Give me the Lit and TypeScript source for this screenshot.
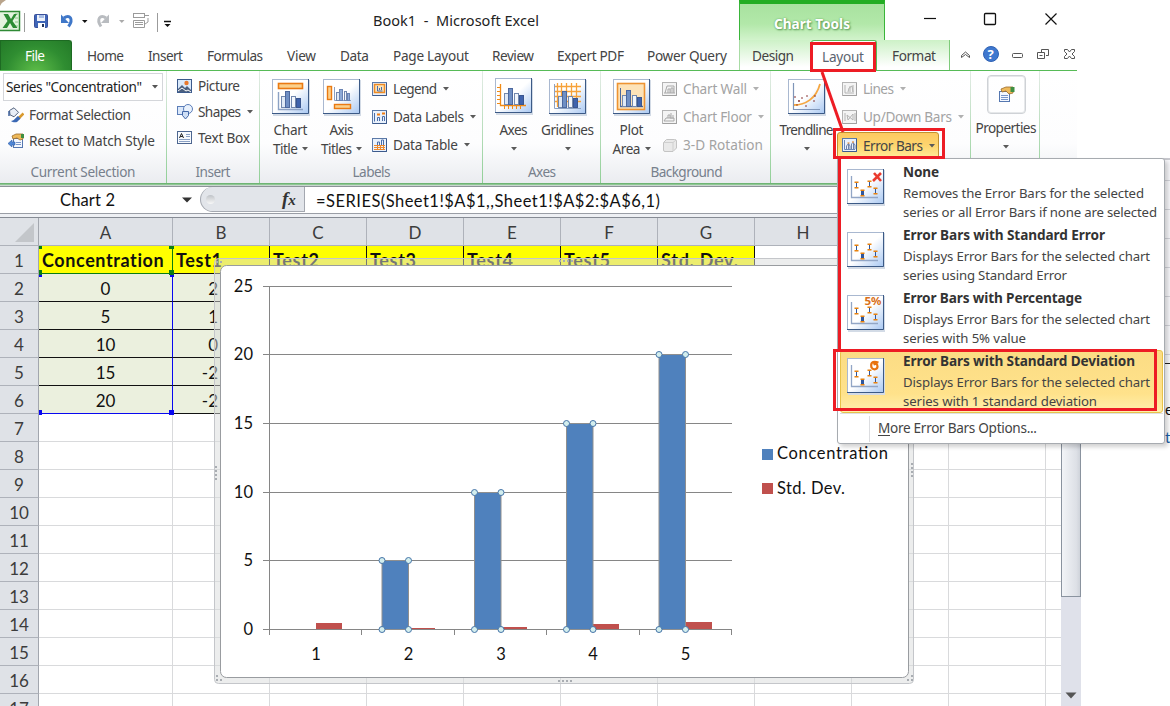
import { LitElement, html, svg, css, nothing } from "lit";
import { customElement, property } from "lit/decorators.js";

/** A single line of text that is tracked to fill an exact width. */
@customElement("fit-label")
class FitLabel extends LitElement {
  @property({ type: Number }) w = 0;
  @property() text = "";
  static styles = css`
    :host { display: inline-block; white-space: pre; flex: none; }
    .t { display: inline-block; text-decoration: inherit; }
  `;
  firstUpdated() {
    const el = this.renderRoot.querySelector(".t") as HTMLElement;
    if (!this.w) return;
    const n = Math.max(1, this.text.length - 1);
    const natural = el.getBoundingClientRect().width;
    el.style.letterSpacing = `${(this.w - natural) / n}px`;
    this.style.width = `${this.w}px`;
  }
  render() {
    return html`<span class="t">${this.text}</span>`;
  }
}

const T = (text: string, w: number, cls = "") => html`<fit-label class=${cls} .w=${w} .text=${text}></fit-label>`;
const arrow = (cls = "") => html`<svg class="arr ${cls}" width="6" height="4"><path d="M0 0h6L3 3.6z" fill="currentColor"/></svg>`;

/* ---------- large icons, 37 x 36 ---------- */
const bars = (x = 0, y = 0) => svg`<g transform="translate(${x} ${y})" stroke-width="1">
  <rect x="9.500" y="17.500" width="4" height="11" fill="#dfe9f6" stroke="#7288ae"/>
  <rect x="13.500" y="12.500" width="4" height="16" fill="#6f8fc4" stroke="#4c689e"/>
  <rect x="19.500" y="17.500" width="4" height="11" fill="#f2f6fc" stroke="#7288ae"/>
  <rect x="24.500" y="19.500" width="4" height="9" fill="#3f63ad" stroke="#3a568f"/></g>`;
const tile = (body: unknown) => html`<svg class="big" width="38" height="37" viewBox="0 0 38 37">
  <defs><linearGradient id="g" x1="0" y1="0" x2="1" y2="1"><stop offset=".5" stop-color="#fff"/><stop offset="1" stop-color="#a9c8f2"/></linearGradient></defs>
  <rect x="1" y="1" width="37" height="36" fill="#d3dbe6"/>
  <rect x=".5" y=".5" width="36" height="34" fill="url(#g)" stroke="#a9b8d0"/>
  <path d="M36.500 0V34.500H0" fill="none" stroke="#3c5a86"/>${body}</svg>`;
const axis = svg`<path d="M6.500 13V30.500H31" fill="none" stroke="#8ba1c4" stroke-width="1.400"/>`;
const bigIcons: Record<string, unknown> = {
  title: tile(svg`<rect x="6.500" y="4.500" width="24" height="5" fill="#fbd08b" stroke="#ea7a12" stroke-width="1.600"/>${axis}${bars()}`),
  axisTitles: tile(svg`<rect x="4.500" y="7.500" width="4" height="13" fill="#fbd08b" stroke="#ea7a12" stroke-width="1.400"/>
    <rect x="11.500" y="25.500" width="16" height="4" fill="#fbd08b" stroke="#ea7a12" stroke-width="1.400"/>
    <path d="M11.500 8V21.500H28" fill="none" stroke="#8ba1c4"/><rect x="13.500" y="13.500" width="3" height="8" fill="#dfe9f6" stroke="#7288ae"/><rect x="16.500" y="10.500" width="3" height="11" fill="#8eaad6" stroke="#6a84b4"/><rect x="21.500" y="12.500" width="2" height="9" fill="#f2f6fc" stroke="#7288ae"/><rect x="24.500" y="14.500" width="2" height="7" fill="#8eaad6" stroke="#6a84b4"/>`),
  axes: tile(svg`<path d="M5.500 6V27.500H31" fill="none" stroke="#f08a16" stroke-width="1.300"/>
    <path d="M2 9.500h4M2 13.500h4M2 17.500h4M2 21.500h4M2 25.500h4M9.500 27v4M13.500 27v4M17.500 27v4M21.500 27v4M25.500 27v4" stroke="#f08a16"/>${bars(0, -2)}`),
  grid: tile(svg`<path d="M8.500 4V28M12.500 4V28M17.500 4V28M22.500 4V28M27.500 4V28M6 7.500H32M6 12.500H32M6 17.500H32M6 22.500H32" stroke="#f6a23a" stroke-width="1.300"/><path d="M5.500 5V29.500H32" fill="none" stroke="#8ba1c4"/>${bars()}`),
  plot: tile(svg`<rect x="4.500" y="4.500" width="27" height="26" fill="#fde3b8" stroke="#ee9432" stroke-width="1.600"/><path d="M7 27.500H30" stroke="#4c689e" stroke-width="1.400"/><path d="M7.500 9V27" stroke="#4c689e"/>${bars(0, -1)}`),
  trend: tile(svg`<path d="M5.500 4V30.500H32" fill="none" stroke="#7f95b8" stroke-width="1.200"/><path d="M6 26C17 26 28 20 32 5" fill="none" stroke="#f5a742" stroke-width="1.800"/>
    <g fill="#7c1d1d"><circle cx="7" cy="18" r=".8"/><circle cx="11" cy="22" r=".9"/><circle cx="14" cy="19" r=".8"/><circle cx="19" cy="17" r=".8"/><circle cx="18" cy="27" r=".8"/><circle cx="27" cy="17" r=".8"/><circle cx="26" cy="22" r=".8"/><circle cx="9" cy="26" r=".7"/></g>`),
};
const ebar = (x: number, y: number, blue = false) => svg`<rect x=${blue ? x - 1.5 : x - 0.5} y=${y} width=${blue ? 3 : 1} height="5" fill="#2f569c"/><rect x=${x - 2} y=${y - 1} width="4" height="1.500" fill="#e8820e"/><rect x=${x - 2} y=${y + 4.5} width="4" height="1.500" fill="#e8820e"/>`;
const errTile = (extra: unknown) => tile(svg`<path d="M4.500 7V28.500H31" fill="none" stroke="#92a6c6" stroke-width="1.300"/>${ebar(9.5, 13.5)}${ebar(15.5, 21.5, true)}${ebar(22.5, 12.5)}${ebar(28.5, 19.5)}${extra}`);

/* ---------- small icons, 15 x 14 ---------- */
const mini = (kind: string) => {
  const off = ["wall", "floor", "lines", "updown", "rot"].includes(kind);
  const st = off ? "#b4b4b4" : "#5c7aa8", bg = off ? "#f4f4f4" : "#e9f1fc";
  if (kind === "rot") return html`<svg class="mini" width="16" height="15"><path d="M1.500 4.500L4.500 1.500H12.500Q14.500 1.500 14.500 3V10L11 13.500H3Q1.500 13.500 1.500 12z" fill="#e9e9e9" stroke="#c4c4c4"/><path d="M2 4.500H11V13M11 4.500L14 2" fill="none" stroke="#cfcfcf"/></svg>`;
  const inner: Record<string, unknown> = {
    legend: svg`<rect x="2.500" y="2.500" width="10" height="8" fill="#fde3b8" stroke="#ee8a22" stroke-width="1.500"/><path d="M5.500 4v5h5M7.500 8V6M9.500 8V5" stroke="#4a6da8" fill="none"/>`,
    labels: svg`<path d="M2.500 3V11.500M5.500 11V7.500h2v3.500M10.500 11V6.500h2v4.500" fill="none" stroke="#4a6da8"/><path d="M5 4.500h3M10 3.500h3" stroke="#ef7d12" stroke-width="2"/>`,
    table: svg`<path d="M5.500 7V4h2v3M9.500 7V2h2v5" fill="none" stroke="#4a6da8"/><path d="M2 7.500h11M2 9.500h11M2 11.500h11M5.500 7v5M8.500 7v5M11.500 7v5" stroke="#f0892a"/>`,
    wall: svg`<path d="M3 11L5 4h7v7M6 11V7h2v4M9 11V6h2v5M2 11h11" fill="none" stroke="#a9a9a9"/>`,
    floor: svg`<path d="M2 11l2-3h8v3zM6 8V5h2v3M9 9V3M11 9V5" fill="none" stroke="#a9a9a9"/>`,
    lines: svg`<path d="M3 3v8h9M6 10l1-4 3-2 1 6M8 4v6M11 3v7" fill="none" stroke="#b4b4b4"/>`,
    updown: svg`<path d="M3 3v8M5 5l6 5V4L6 10zM13 3v8" fill="none" stroke="#b4b4b4"/>`,
    error: svg`<path d="M2.500 2v9.500H13" stroke="#6d88b4" fill="none"/><path d="M4.500 11V8l2-2.500L8 8v3M6.500 6v5M9.500 11V6l1.500-1.500L13 7v4M11.500 5v6" fill="none" stroke="#7183a8"/><path d="M5.500 5h2M10 4h2" stroke="#e87d10"/>`,
  };
  return html`<svg class="mini" width="16" height="15"><rect x=".5" y=".5" width="14" height="13" fill=${bg} stroke=${st}/>${inner[kind]}<path d="M14.500 1V13.500H1" fill="none" stroke=${off ? "#a0a0a0" : "#3c5a8c"}/></svg>`;
};
const propIcon = html`<svg class="mini" width="17" height="16"><rect x="1.500" y="5.500" width="10" height="10" fill="#f4f8ff" stroke="#5577b0"/><path d="M3 9.500h7M3 11.500h7M3 13.500h7" stroke="#7895c8"/><path d="M3 3L8 1l7 0v6l-4 1-3-3-4 1z" fill="#eeb95a" stroke="#9a6b2a" stroke-width=".8"/><path d="M12.500 1h4v5h-4z" fill="#3e8f42"/></svg>`;
const misc: Record<string, unknown> = {
  format: html`<svg class="mini" width="17" height="16"><path d="M1.500 3.500L6 .8l4.500 4.500-4.500 4.500-4-2z" fill="#e9eef7" stroke="#56657f"/><path d="M1 4v5" stroke="#3d5f9a" stroke-width="1.500"/><path d="M15.500 6.500L10 12" stroke="#d99a2e" stroke-width="2.600"/><path d="M10 9l2.500 2.500L9 15c-2 .8-5 0-6-1 3 0 4-3 7-5z" fill="#3b68b4"/></svg>`,
  reset: html`<svg class="mini" width="17" height="16"><rect x="5.500" y="5.500" width="9" height="9" fill="#f4f8ff" stroke="#5577b0"/><path d="M8 9.500h5M8 11.500h5" stroke="#7895c8"/><path d="M4 3l4-2 7 0v5l-3 1-3-2-4 1z" fill="#eeb95a" stroke="#9a6b2a" stroke-width=".8"/><path d="M13 1h3v4h-3z" fill="#3e8f42"/><path d="M0 10.500L4 7v2h3v3H4v2z" fill="#4f86d6" stroke="#2f5ea8" stroke-width=".6"/></svg>`,
  picture: html`<svg class="mini" width="16" height="15"><rect x=".5" y=".5" width="14" height="13" fill="#d9e9fb" stroke="#3c5a8c"/><path d="M1 13V10l4-4 3 3 2-2 4 4v2z" fill="#4a5f7f"/><path d="M1 12l4-3 4 3 2-1 3 2" fill="none" stroke="#fff"/><circle cx="9.500" cy="4" r="2.200" fill="#e8792e"/></svg>`,
  shapes: html`<svg class="mini" width="17" height="16"><rect x=".5" y="2.500" width="9" height="8" fill="#dbe8fa" stroke="#5b7db8"/><circle cx="11" cy="5" r="4.500" fill="#e9f1fc" stroke="#5b7db8"/><path d="M5.500 7.500h6v4l-3 3.500-3-3.500z" fill="#cfdff5" stroke="#4468a8"/></svg>`,
  textbox: html`<svg class="mini" width="16" height="14"><rect x=".5" y=".5" width="14" height="12" fill="#f7fafe" stroke="#4d6690"/><path d="M9 3.500h4M9 5.500h4M2 8.500h11M2 10.500h11" stroke="#8aa0c4"/><path d="M2.500 7L4.500 2.500L6.500 7M3.200 5.500h2.600" stroke="#222" fill="none"/></svg>`,
};

const big = (icon: string, l1: [string, number], l2: [string, number] | null, cls: string) => html`
  <div class="bigbtn ${cls}">${bigIcons[icon]}
    <div class="bl first">${T(l1[0], l1[1])}</div>
    <div class="bl">${l2 ? T(l2[0], l2[1]) : nothing}${arrow(l2 ? "gap4" : "")}</div>
  </div>`;
const small = (icon: string, text: string, w: number, off = false, arr = true) => html`
  <div class="small ${off ? "off" : ""}">${mini(icon)}${T(text, w)}${arr ? arrow() : nothing}</div>`;
const row26 = (icon: string, text: string, w: number, arr = false) => html`
  <div class="small r26">${misc[icon]}${T(text, w)}${arr ? arrow() : nothing}</div>`;

const COLS = ["A", "B", "C", "D", "E", "F", "G", "H", "", "", ""];
const HEAD: [string, number][] = [["Concentration", 122], ["Test1", 46], ["Test2", 46], ["Test3", 46], ["Test4", 46], ["Test5", 46], ["Std. Dev.", 77]];
const A = ["0", "5", "10", "15", "20"];
const B = ["2", "1", "0", "-2", "-2"];
const CHART_X = [316, 408.5, 501, 593, 685.5];
const BLUE_TOP = [0, 560, 492, 423, 354];
const RED_TOP = [623, 628, 627, 624, 622];
const Y_LABELS: [string, number][] = [["25", 286.5], ["20", 354.5], ["15", 423.5], ["10", 492.5], ["5", 560.5], ["0", 629.5]];

const MENU: { t: string; tw: number; a: string; aw: number; b: string; bw: number; x: unknown }[] = [
  { t: "None", tw: 36, a: "Removes the Error Bars for the selected", aw: 241, b: "series or all Error Bars if none are selected", bw: 254,
    x: svg`<path d="M27 4l7 8M34 4l-8 8" stroke="#ea3a2e" stroke-width="2.600"/>` },
  { t: "Error Bars with Standard Error", tw: 202, a: "Displays Error Bars for the selected chart", aw: 247, b: "series using Standard Error", bw: 164, x: nothing },
  { t: "Error Bars with Percentage", tw: 179, a: "Displays Error Bars for the selected chart", aw: 247, b: "series with 5% value", bw: 123,
    x: svg`<text x="17.500" y="10" font-size="10" font-weight="700" font-family="Noto Sans, sans-serif" textLength="17" lengthAdjust="spacingAndGlyphs" fill="#d9701a">5%</text>` },
  { t: "Error Bars with Standard Deviation", tw: 232, a: "Displays Error Bars for the selected chart", aw: 247, b: "series with 1 standard deviation", bw: 194,
    x: svg`<path d="M31.500 4.500c-7-2-8 1-7 5 2 3 6 2 6-1s-2-3-4-2" fill="none" stroke="#e8720e" stroke-width="2.200"/>` },
];

@customElement("app-root")
class AppRoot extends LitElement {
  static styles = css`
    :host { display: block; position: relative; width: 1170px; height: 706px; overflow: hidden; background: #fff;
      font: 13.6px/20px "Noto Sans", sans-serif; color: #444; }
    svg { display: block; flex: none; }
    .page { display: flex; height: 706px; }
    .win { width: 1081px; display: flex; flex-direction: column; flex: none; }
    .side { width: 89px; padding-top: 158px; }
    .side-in { height: 206px; border-top: 2px solid #c9c9cf; border-bottom: 1px solid #222;
      background: repeating-linear-gradient(#f8f8fb 0 20px, #d3d4da 20px 21px, #f8f8fb 21px 29px); box-sizing: border-box; }
    .side-t { font: 15px/24px "Lato", sans-serif; color: #111; padding: 33px 0 0 84px; }
    .blue { color: #1b5fa8; padding-top: 4px; }

    .head { height: 70px; display: flex; flex: none; }
    .headL { width: 739px; }
    .qat { height: 40px; display: flex; align-items: center; color: #222; }
    .apptitle { font-size: 14.5px; color: #222; margin-left: 198px; }
    .tabs { display: flex; height: 30px; }
    .file { width: 72px; height: 30px; box-sizing: border-box; padding-left: 24px; line-height: 30px; color: #fff; border: 1px solid #1d6a22; border-bottom: 0;
      border-radius: 0 3px 0 0; background: radial-gradient(ellipse at 50% 110%, #5fbe49 0, #2f8d31 60%, #237a28 100%); }
    .tab { line-height: 32px; }
    .ctxwrap { width: 211px; height: 70px; }
    .ctx { height: 40px; width: 146px; box-sizing: border-box; border-top: 4px solid #22ad22; border-left: 1px solid #3ab53a; border-right: 1px solid #3ab53a;
      background: linear-gradient(#a8e29f, #b2e8a9 55%, #d2f3cc); padding: 10px 0 0 34px; color: #fff; font-weight: 700; text-shadow: 1px 1px 2px #5a9a55, 0 0 2px #6bab65; }
    .ctxtabs { height: 30px; display: flex; background: linear-gradient(#cdf1c7, #fff 90%); border-left: 1px solid #a8dca4; border-right: 1px solid #7ecb7a; box-sizing: border-box; }
    .ctxtabs .tab:nth-child(1) { padding-left: 12px; }
    .ctxtabs .tab.fmt { margin-left: 15px; }
    .laytab { background: #fff; border: 1px solid #57bb57; border-bottom: 0; border-radius: 3px 3px 0 0; width: 66px; box-sizing: border-box; margin-left: 17px; padding-left: 10px; color: #5c6470; line-height: 31px; }
    .wctl { width: 130px; }

    .ribbon { width: 1077px; height: 113px; display: flex; background: linear-gradient(#fff 0, #fdfdfe 65%, #eaecf0 100%); border-top: 1px solid #57bb57; box-sizing: border-box; flex: none; }
    .grp { box-sizing: border-box; border-right: 1px solid; border-image: linear-gradient(#e4ece6, #8fcf95) 1; display: flex; flex-direction: column; height: 112px; }
    .grp > .body { height: 92px; display: flex; flex: none; }
    .cap { height: 18px; display: flex; justify-content: center; align-items: center; color: #77808c; }
    .g1 { width: 167px; } .g2 { width: 93px; } .g3 { width: 223px; } .g4 { width: 118px; } .g5 { width: 170px; } .g6 { width: 200px; } .g7 { width: 69px; }
    .g5 .cap { padding-left: 2px; } .g3 .cap, .g4 .cap { padding-left: 1px; }
    .g1 .body, .g2 .body { flex-direction: column; padding-top: 2px; box-sizing: border-box; }
    .combo { width: 160px; height: 28px; box-sizing: border-box; margin: 0 0 1px 3px; border: 1px solid #d4d6da; background: #fff; display: flex; align-items: center; padding-left: 2px; color: #222; }
    .combo .arr { margin-left: 10px; color: #555; }
    .small { height: 28px; display: flex; align-items: center; }
    .small .mini { width: 16px; margin-right: 5px; }
    .small .arr { margin-left: 6px; }
    .r26 { height: 26px; }
    .g1 .r26 { padding-left: 8px; } .g2 .r26 { padding-left: 10px; }
    .off { color: #a3a3a3; }
    .off svg.arr { color: #b0b0b0; }
    .arr { color: #5a5a5a; }
    .col { padding-top: 4px; }
    .bigbtn { display: flex; flex-direction: column; align-items: center; padding-top: 8px; flex: none; }
    .axesb { padding-top: 7px; }
    .axesb .first { margin-top: 5px; }
    .bl { height: 19px; display: flex; align-items: center; justify-content: center; }
    .first { margin-top: 4px; }
    .gap4 { margin-left: 4px; }
    .b51 { width: 51px; } .b53 { width: 53px; } .b55 { width: 55px; } .b67 { width: 67px; }
    .g3 .body { padding-left: 5px; } .g4 .body, .g5 .body { padding-left: 4px; } .g6 .body { padding-left: 2px; }
    .g3 .col { margin-left: 5px; } .g5 .col { margin-left: 4px; } .g6 .col { margin-left: 2px; }
    .hot { box-sizing: border-box; height: 27px; margin: 1px 0 0 -5px; width: 102px; padding-left: 4px; border: 1px solid #c2902e; border-radius: 3px; background: linear-gradient(#fdc95f, #fdd56f 50%, #ffee9a); color: #444; }
    .propbox { width: 39px; height: 39px; border: 1px solid #cfd2d6; border-radius: 4px; box-sizing: border-box; box-shadow: inset 0 0 0 1px #e6e8ea; padding: 10px 0 0 10px; }
    .g7 .bigbtn { padding: 4px 0 0 1px; width: 68px; }
    .g7 .first { margin-top: 4px; }

    .rule { height: 4px; background: linear-gradient(#6fb474 0 1px, #8fc794 1px 2px, #c9d6cf 2px 3px, #8e9399 3px); flex: none; }
    .fbar { height: 26px; display: flex; border-bottom: 1px solid #9a9ea6; flex: none; font: 16.5px/28px "Lato", sans-serif; color: #111; }
    .name { width: 200px; box-sizing: border-box; padding-left: 60px; display: flex; align-items: center; }
    .name svg { margin-left: 67px; }
    .fxw { width: 105px; height: 25px; box-sizing: border-box; border: 1px solid #a4a8b0; border-top: 0; border-radius: 14px 0 0 14px; background: #e2e5ea; display: flex; align-items: center; }
    .knob { width: 9px; height: 9px; border-radius: 50%; background: linear-gradient(#bfc3c8, #f8f8f8); margin-left: 5px; }
    .fx { font: italic 700 19px/24px "Liberation Serif", serif; margin-left: 67px; color: #333; }
    .fx small { font-size: 15px; }
    .fin { padding-left: 11px; }
    .under { height: 4px; box-sizing: border-box; background: #eef0f4; border-bottom: 1px solid #868b94; flex: none; }
    .work { display: flex; height: 488px; overflow: hidden; }
    .sheet { width: 1061px; overflow: hidden; font: 17px/29px "Lato", sans-serif; color: #111; }
    .r { display: flex; height: 28px; width: 1200px; }
    .c { width: 97px; height: 28px; box-sizing: border-box; border-right: 1px solid #d9dadc; border-bottom: 1px solid #d9dadc; flex: none; text-align: center; }
    .c.a { width: 134px; }
    .rh { width: 39px; height: 28px; box-sizing: border-box; background: #dfe2e7; border-right: 1px solid #a2a6ae; border-bottom: 1px solid #aeb2ba; text-align: center; color: #3c3c3c; flex: none; }
    .ch .c { background: #dfe2e7; border-color: #aeb2ba; color: #3c3c3c; }
    .tri { padding: 5px 0 0 15px; }
    .y { background: #ff0; border-color: #111; font-weight: 700; font-size: 18px; text-align: left; padding-left: 3px; line-height: 29px; }
    .y.a { border-right-color: #0a7d12; border-bottom-color: #0a7d12; }
    .e { background: #ebf0de; border-color: #111; }
    .e.a { border-right-color: #0808f0; }
    .e.last { border-bottom-color: #0808f0; }
    .eb { text-align: right; padding-right: 51px; border-right-color: #ebf0de; }
    .sb { width: 20px; background: #dfe1ea; display: flex; flex-direction: column; justify-content: space-between; align-items: center; }
    .thumb { width: 20px; height: 379px; box-sizing: border-box; border: 1px solid #8a939f; border-top: 0; background: linear-gradient(90deg, #f2f4f7, #dde0e6 80%, #cfd3da); }
    .sb svg { margin-bottom: 7px; }

    .chart { position: absolute; left: 214px; top: 258px; width: 700px; height: 426px; }
    .chart text { font: 16.5px "Lato", sans-serif; fill: #111; }
    .menu { position: absolute; left: 837px; top: 158px; width: 328px; height: 286px; box-sizing: border-box; background: #fff; border: 1px solid #a7abb0; border-radius: 0 3px 3px 3px; box-shadow: 3px 3px 4px rgba(0,0,0,.18); padding: 2px 1px 0 2px; }
    .mi { height: 63px; box-sizing: border-box; display: flex; padding: 8px 0 0 7px; }
    .mi.sel { background: linear-gradient(#fbdc84, #ffe28b 70%, #fff0ad); border: 1px solid #e8c24a; border-radius: 3px; padding: 7px 0 0 6px; }
    .mtx { margin: -7px 0 0 18px; display: flex; flex-direction: column; font-size: 13.2px; }
    .mtx fit-label { height: 19px; line-height: 19px; }
    .mtx .mt { font-weight: 700; color: #333; font-size: 13.6px; height: 22px; }
    .more { height: 30px; display: flex; border-top: 1px solid #dfe0e3; }
    .more .gut { width: 29px; border-right: 1px solid #dcdde0; margin: 2px 0; }
    .more .mlb { padding: 4px 0 0 8px; display: flex; }
    .mlb .u { text-decoration: underline; text-underline-offset: 2px; }
    .marks { position: absolute; left: 0; top: 0; }
  `;

  private head() {
    return html`<div class="head">
      <div class="headL">
        <div class="qat">
          <svg width="175" height="40">
            <path d="M0 0H6Q2 2 0 6z" fill="#b9a48c"/>
            <rect x="-2" y="11.500" width="21.500" height="19" fill="#e4f3df" stroke="#2f8a35" stroke-width="1.500"/>
            <path d="M15 14h3M15 18h3M15 22h3M15 26h3" stroke="#8cc98c"/>
            <path d="M3.500 14H8l3 5 3-5h3l-4.500 7 5 7H13l-3-5-3 5H2.500l5-7z" fill="#2c8c34"/>
            <path d="M24.500 13V32" stroke="#9b9b9b"/>
            <rect x="34.500" y="14.500" width="13" height="13" rx="1" fill="#3f66b8" stroke="#3a509a"/><rect x="37" y="15" width="8" height="6" fill="#eef2fa"/><path d="M39 15h5v3h-5z" fill="#a6bce4"/><rect x="38" y="23" width="7" height="5" fill="#fff"/><rect x="42" y="24" width="2" height="3" fill="#22345e"/>
            <path d="M64 18C69.500 13.500 74 19 68.500 26.500" fill="none" stroke="#3f77c8" stroke-width="3"/><path d="M61 14.500v8.500h8z" fill="#3f77c8"/>
            <path d="M82 20h5.500l-2.700 3z" fill="#111"/>
            <path d="M106 18C100.500 13.500 96 19 101 26.500" fill="none" stroke="#b9bcc0" stroke-width="3"/><path d="M109 14.500v8.500h-8z" fill="#b9bcc0"/>
            <path d="M119 20h5.500l-2.700 3z" fill="#aaa"/>
            <g fill="none" stroke="#9b9b9b"><rect x="133.500" y="13.500" width="11" height="4"/><path d="M145 15.500h4M133.500 20.500h11v7h-11zM135 22.500h8M135 24.500h8M148 18v4l-3 2"/></g>
            <path d="M157.500 13V32" stroke="#9b9b9b"/>
            <path d="M164 21.500h7" stroke="#111" stroke-width="1.500"/><path d="M164.500 24h6l-3 3z" fill="#111"/>
          </svg>
          <div class="apptitle">${T("Book1  -  Microsoft Excel", 166)}</div>
        </div>
        <div class="tabs">
          <div class="file">${T("File", 20)}</div>
          ${([["Home", 37, 15], ["Insert", 35, 24], ["Formulas", 56, 24], ["View", 29, 24], ["Data", 29, 24], ["Page Layout", 76, 24], ["Review", 42, 23], ["Expert PDF", 67, 23], ["Power Query", 80, 23]] as [string, number, number][]).map(
            ([t, w, m]) => html`<div class="tab" style="margin-left:${m}px">${T(t, w)}</div>`)}
        </div>
      </div>
      <div class="ctxwrap">
        <div class="ctx">${T("Chart Tools", 76)}</div>
        <div class="ctxtabs"><div class="tab">${T("Design", 42)}</div><div class="laytab">${T("Layout", 42)}</div><div class="tab fmt">${T("Format", 44)}</div></div>
      </div>
      <svg class="wctl" width="130" height="70" viewBox="950 0 130 70" overflow="visible">
        <path d="M924 18.500h12" stroke="#111" stroke-width="1.200"/><rect x="984.500" y="13.500" width="11" height="11" rx="1" fill="none" stroke="#111" stroke-width="1.300"/>
        <path d="M1045.500 13.500l11 11M1056.500 13.500l-11 11" stroke="#111" stroke-width="1.200"/>
        <path d="M961.500 55.500l4-3.500 4 3.500v2l-4-3-4 3z" fill="#fff" stroke="#555"/>
        <circle cx="991" cy="54" r="7.500" fill="#3f78cf" stroke="#2f62b4"/><text x="987.500" y="59" font-size="13" font-weight="700" fill="#fff">?</text>
        <rect x="1012.500" y="53.500" width="10" height="4" rx="1" fill="#fff" stroke="#555"/>
        <path d="M1041.500 52v-2.500h7v6H1046M1037.500 52.500h7v6h-7zM1039.500 55.500h3" fill="#fff" stroke="#555"/>
        <path d="M1064.500 49.500h3l2 2.500 2-2.500h3v2l-2.500 2.500 2.500 2.500v2h-3l-2-2.500-2 2.500h-3v-2l2.500-2.500-2.500-2.500z" fill="#fff" stroke="#555"/>
      </svg>
    </div>`;
  }

  private ribbon() {
    return html`<div class="ribbon">
      <div class="grp g1"><div class="body"><div class="combo"><span>${T('Series "Concentration"', 136)}</span>${arrow()}</div>
        ${row26("format", "Format Selection", 102)}${row26("reset", "Reset to Match Style", 126)}</div><div class="cap">${T("Current Selection", 105)}</div></div>
      <div class="grp g2"><div class="body">${row26("picture", "Picture", 42)}${row26("shapes", "Shapes", 43, true)}${row26("textbox", "Text Box", 52)}</div><div class="cap">${T("Insert", 35)}</div></div>
      <div class="grp g3"><div class="body">${big("title", ["Chart", 34], ["Title", 25], "b51")}${big("axisTitles", ["Axis", 24], ["Titles", 31], "b51")}
        <div class="col">${small("legend", "Legend", 44)}${small("labels", "Data Labels", 71)}${small("table", "Data Table", 65)}</div></div><div class="cap">${T("Labels", 38)}</div></div>
      <div class="grp g4"><div class="body">${big("axes", ["Axes", 28], null, "b53 axesb")}${big("grid", ["Gridlines", 53], null, "b55")}</div><div class="cap">${T("Axes", 28)}</div></div>
      <div class="grp g5"><div class="body">${big("plot", ["Plot", 24], ["Area", 28], "b53")}
        <div class="col">${small("wall", "Chart Wall", 64, true)}${small("floor", "Chart Floor", 69, true)}${small("rot", "3-D Rotation", 80, true, false)}</div></div><div class="cap">${T("Background", 72)}</div></div>
      <div class="grp g6"><div class="body">${big("trend", ["Trendline", 54], null, "b67")}
        <div class="col">${small("lines", "Lines", 31, true)}${small("updown", "Up/Down Bars", 89, true)}<div class="small hot">${mini("error")}${T("Error Bars", 60)}${arrow()}</div></div></div><div class="cap"></div></div>
      <div class="grp g7"><div class="body"><div class="bigbtn"><div class="propbox">${propIcon}</div><div class="bl first">${T("Properties", 61)}</div><div class="bl">${arrow()}</div></div></div><div class="cap"></div></div>
    </div>`;
  }

  private sheet() {
    return html`<div class="work"><div class="sheet">
      <div class="r ch"><div class="rh"><svg class="tri" width="20" height="20"><path d="M0 19L19 0V19z" fill="#c3c6ca"/></svg></div>${COLS.map((c, i) => html`<div class="c ${i ? "" : "a"}">${c}</div>`)}</div>
      ${Array.from({ length: 17 }, (_, r) => html`<div class="r"><div class="rh">${r + 1}</div>${COLS.map((_c, i) => {
        const a = i ? "" : "a";
        if (r === 0 && i < 7) return html`<div class="c y ${a}">${T(HEAD[i][0], HEAD[i][1])}</div>`;
        if (r > 0 && r < 6 && i === 0) return html`<div class="c e a ${r === 5 ? "last" : ""}">${A[r - 1]}</div>`;
        if (r > 0 && r < 6 && i === 1) return html`<div class="c e eb">${B[r - 1]}</div>`;
        return html`<div class="c ${a}"></div>`;
      })}</div>`)}
    </div>
    <div class="sb"><div class="thumb"></div><svg width="12" height="7"><path d="M.5 .5h11L6 6.500z" fill="#555"/></svg></div></div>`;
  }

  private chart() {
    const dots = (x: number, y: number, v: boolean) => [0, 1, 2, 3].map((k) => svg`<rect x=${x + (v ? 0 : k * 4)} y=${y + (v ? k * 4 : 0)} width="2" height="2" fill="#a9adb2"/>`);
    const handle = (x: number, y: number) => svg`<circle cx=${x} cy=${y} r="3" fill="#d3eeee" stroke="#4574a8"/>`;
    return html`<svg class="chart" width="700" height="426" viewBox="214 258 700 426">
      <rect x="214.500" y="258.500" width="699" height="425" rx="4" fill="#d9dbdc" fill-opacity=".5" stroke="#c4c6ca"/>
      <rect x="220.500" y="265.500" width="688" height="412" rx="6" fill="#fff" stroke="#999ca0"/>
      ${dots(215, 466, true)}${dots(911, 463, true)}${dots(558, 680, false)}${dots(559, 260, false)}
      <g fill="#a9adb2"><rect x="216" y="675" width="2" height="2"/><rect x="216" y="679" width="2" height="2"/><rect x="220" y="679" width="2" height="2"/><rect x="911" y="675" width="2" height="2"/><rect x="911" y="679" width="2" height="2"/><rect x="907" y="679" width="2" height="2"/><rect x="216" y="261" width="2" height="2"/><rect x="220" y="261" width="2" height="2"/></g>
      ${Y_LABELS.map(([t, y]) => svg`<path d="M263 ${y}H732" stroke="#868686"/><text x="253" y=${y + 5} text-anchor="end">${t}</text>`)}
      <path d="M269.500 286V635M361.500 629v6M454.500 629v6M546.500 629v6M639.500 629v6M731.500 629v6" stroke="#868686"/>
      ${CHART_X.map((x, i) => svg`<rect x=${Math.round(x)} y=${RED_TOP[i]} width="26" height=${629 - RED_TOP[i]} fill="#c0504d"/>
        ${BLUE_TOP[i] ? svg`<rect x=${x - 26.5} y=${BLUE_TOP[i] + 0.5} width="26.500" height=${629 - BLUE_TOP[i]} fill="#4f81bd" stroke="#8f8f8f"/>
        ${handle(x - 26.5, BLUE_TOP[i] + 0.5)}${handle(x, BLUE_TOP[i] + 0.5)}${handle(x - 26.5, 629.5)}${handle(x, 629.5)}` : nothing}
        <text x=${x} y="660" text-anchor="middle">${i + 1}</text>`)}
      <rect x="762" y="449" width="11" height="11" fill="#4f81bd"/><text x="777" y="459" textLength="111">Concentration</text>
      <rect x="762" y="483" width="11" height="11" fill="#c0504d"/><text x="777" y="494" textLength="68">Std. Dev.</text>
    </svg>`;
  }

  private menu() {
    return html`<div class="menu">
      ${MENU.map((m, i) => html`<div class="mi ${i === 3 ? "sel" : ""}">${errTile(m.x)}<div class="mtx">${T(m.t, m.tw, "mt")}${T(m.a, m.aw)}${T(m.b, m.bw)}</div></div>`)}
      <div class="more"><div class="gut"></div><div class="mlb">${T("M", 12, "u")}${T("ore Error Bars Options...", 147)}</div></div>
    </div>`;
  }

  render() {
    return html`<div class="page">
      <div class="win">${this.head()}${this.ribbon()}
        <div class="rule"></div>
        <div class="fbar"><div class="name">${T("Chart 2", 55)}<svg width="10" height="6"><path d="M0 .5h10L5 5.500z" fill="#333"/></svg></div>
          <div class="fxw"><div class="knob"></div><div class="fx">f<small>x</small></div></div>
          <div class="fin">${T("=SERIES(Sheet1!$A$1,,Sheet1!$A$2:$A$6,1)", 344)}</div></div>
        <div class="under"></div>
        ${this.sheet()}
      </div>
      <div class="side"><div class="side-in"></div><div class="side-t">e</div><div class="side-t blue">t</div></div>
    </div>
    <svg class="marks" width="200" height="420">
      <g fill="#0a7d12"><rect x="39" y="246" width="3" height="3"/><rect x="169" y="246" width="5" height="3"/><rect x="39" y="270" width="3" height="5"/><rect x="169" y="270" width="5" height="5"/></g>
      <g fill="#0808f0"><rect x="39" y="275" width="3" height="2"/><rect x="170" y="275" width="4" height="2"/><rect x="39" y="410" width="3" height="5"/><rect x="169" y="410" width="5" height="5"/></g>
    </svg>
    ${this.chart()}${this.menu()}
    <svg class="marks" width="1170" height="706" fill="none" stroke="#ed1c24" stroke-width="3">
      <rect x="811.500" y="43.500" width="63" height="27"/><path d="M822 72L843 132"/><rect x="834.500" y="129.500" width="109" height="28"/>
      <path d="M839.500 159V350"/><rect x="834.500" y="350.500" width="321" height="59"/>
    </svg>`;
  }
}
